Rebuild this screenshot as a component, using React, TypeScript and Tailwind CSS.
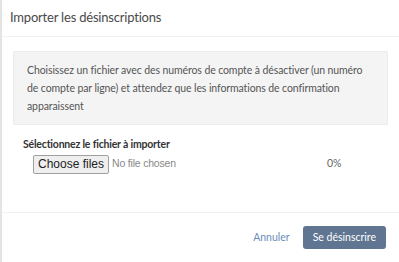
export default function App() {
  return (
    <div
      className="w-[399px] h-[262px] bg-white border-l-2 border-[#e4e4e4] flex flex-col overflow-hidden"
      style={{ fontFamily: "Lato, 'Noto Sans', sans-serif" }}
    >
      {/* Header */}
      <div className="h-[37px] flex items-center px-[8px] border-b border-[#f0f0f0]">
        <h2 className="text-[13px] text-[#4a4a4a] tracking-[-0.2px]">Importer les désinscriptions</h2>
      </div>

      {/* Body */}
      <div className="flex-1 px-[11px] pt-[14px]">
        <div className="bg-[#f4f4f4] border border-[#ececec] rounded-[2px] px-[13px] py-[9px] text-[10.5px] leading-[18px] text-[#555] tracking-[-0.1px]">
          Choisissez un fichier avec des numéros de compte à désactiver (un numéro de compte par ligne) et attendez que les informations de confirmation apparaissent
        </div>

        <div className="pl-[10px] pt-[12px]">
          <p className="text-[10.5px] font-bold text-[#333] tracking-[-0.2px]">Sélectionnez le fichier à importer</p>
          <div className="flex items-center mt-[2px] pl-[10px]">
            <div className="flex items-center w-[294px]" style={{ fontFamily: "'Liberation Sans', Arial, sans-serif" }}>
              <button className="h-[19px] px-[4px] border border-[#a0a0a0] rounded-[2px] bg-[#efefef] text-[#222] text-[12px] leading-none">
                Choose files
              </button>
              <span className="ml-[3px] text-[10.5px] text-[#888] tracking-[-0.2px]">No file chosen</span>
            </div>
            <span className="text-[10.5px] text-[#666]">0%</span>
          </div>
        </div>
      </div>

      {/* Footer */}
      <div className="h-[50px] border-t border-[#f0f0f0] flex items-center justify-end gap-[13px] pr-[13px]">
        <button className="text-[10.5px] text-[#6b8cb8]">Annuler</button>
        <button className="h-[23px] px-[10px] rounded-[3px] bg-[#5f7591] text-white text-[10.5px]">
          Se désinscrire
        </button>
      </div>
    </div>
  );
}
